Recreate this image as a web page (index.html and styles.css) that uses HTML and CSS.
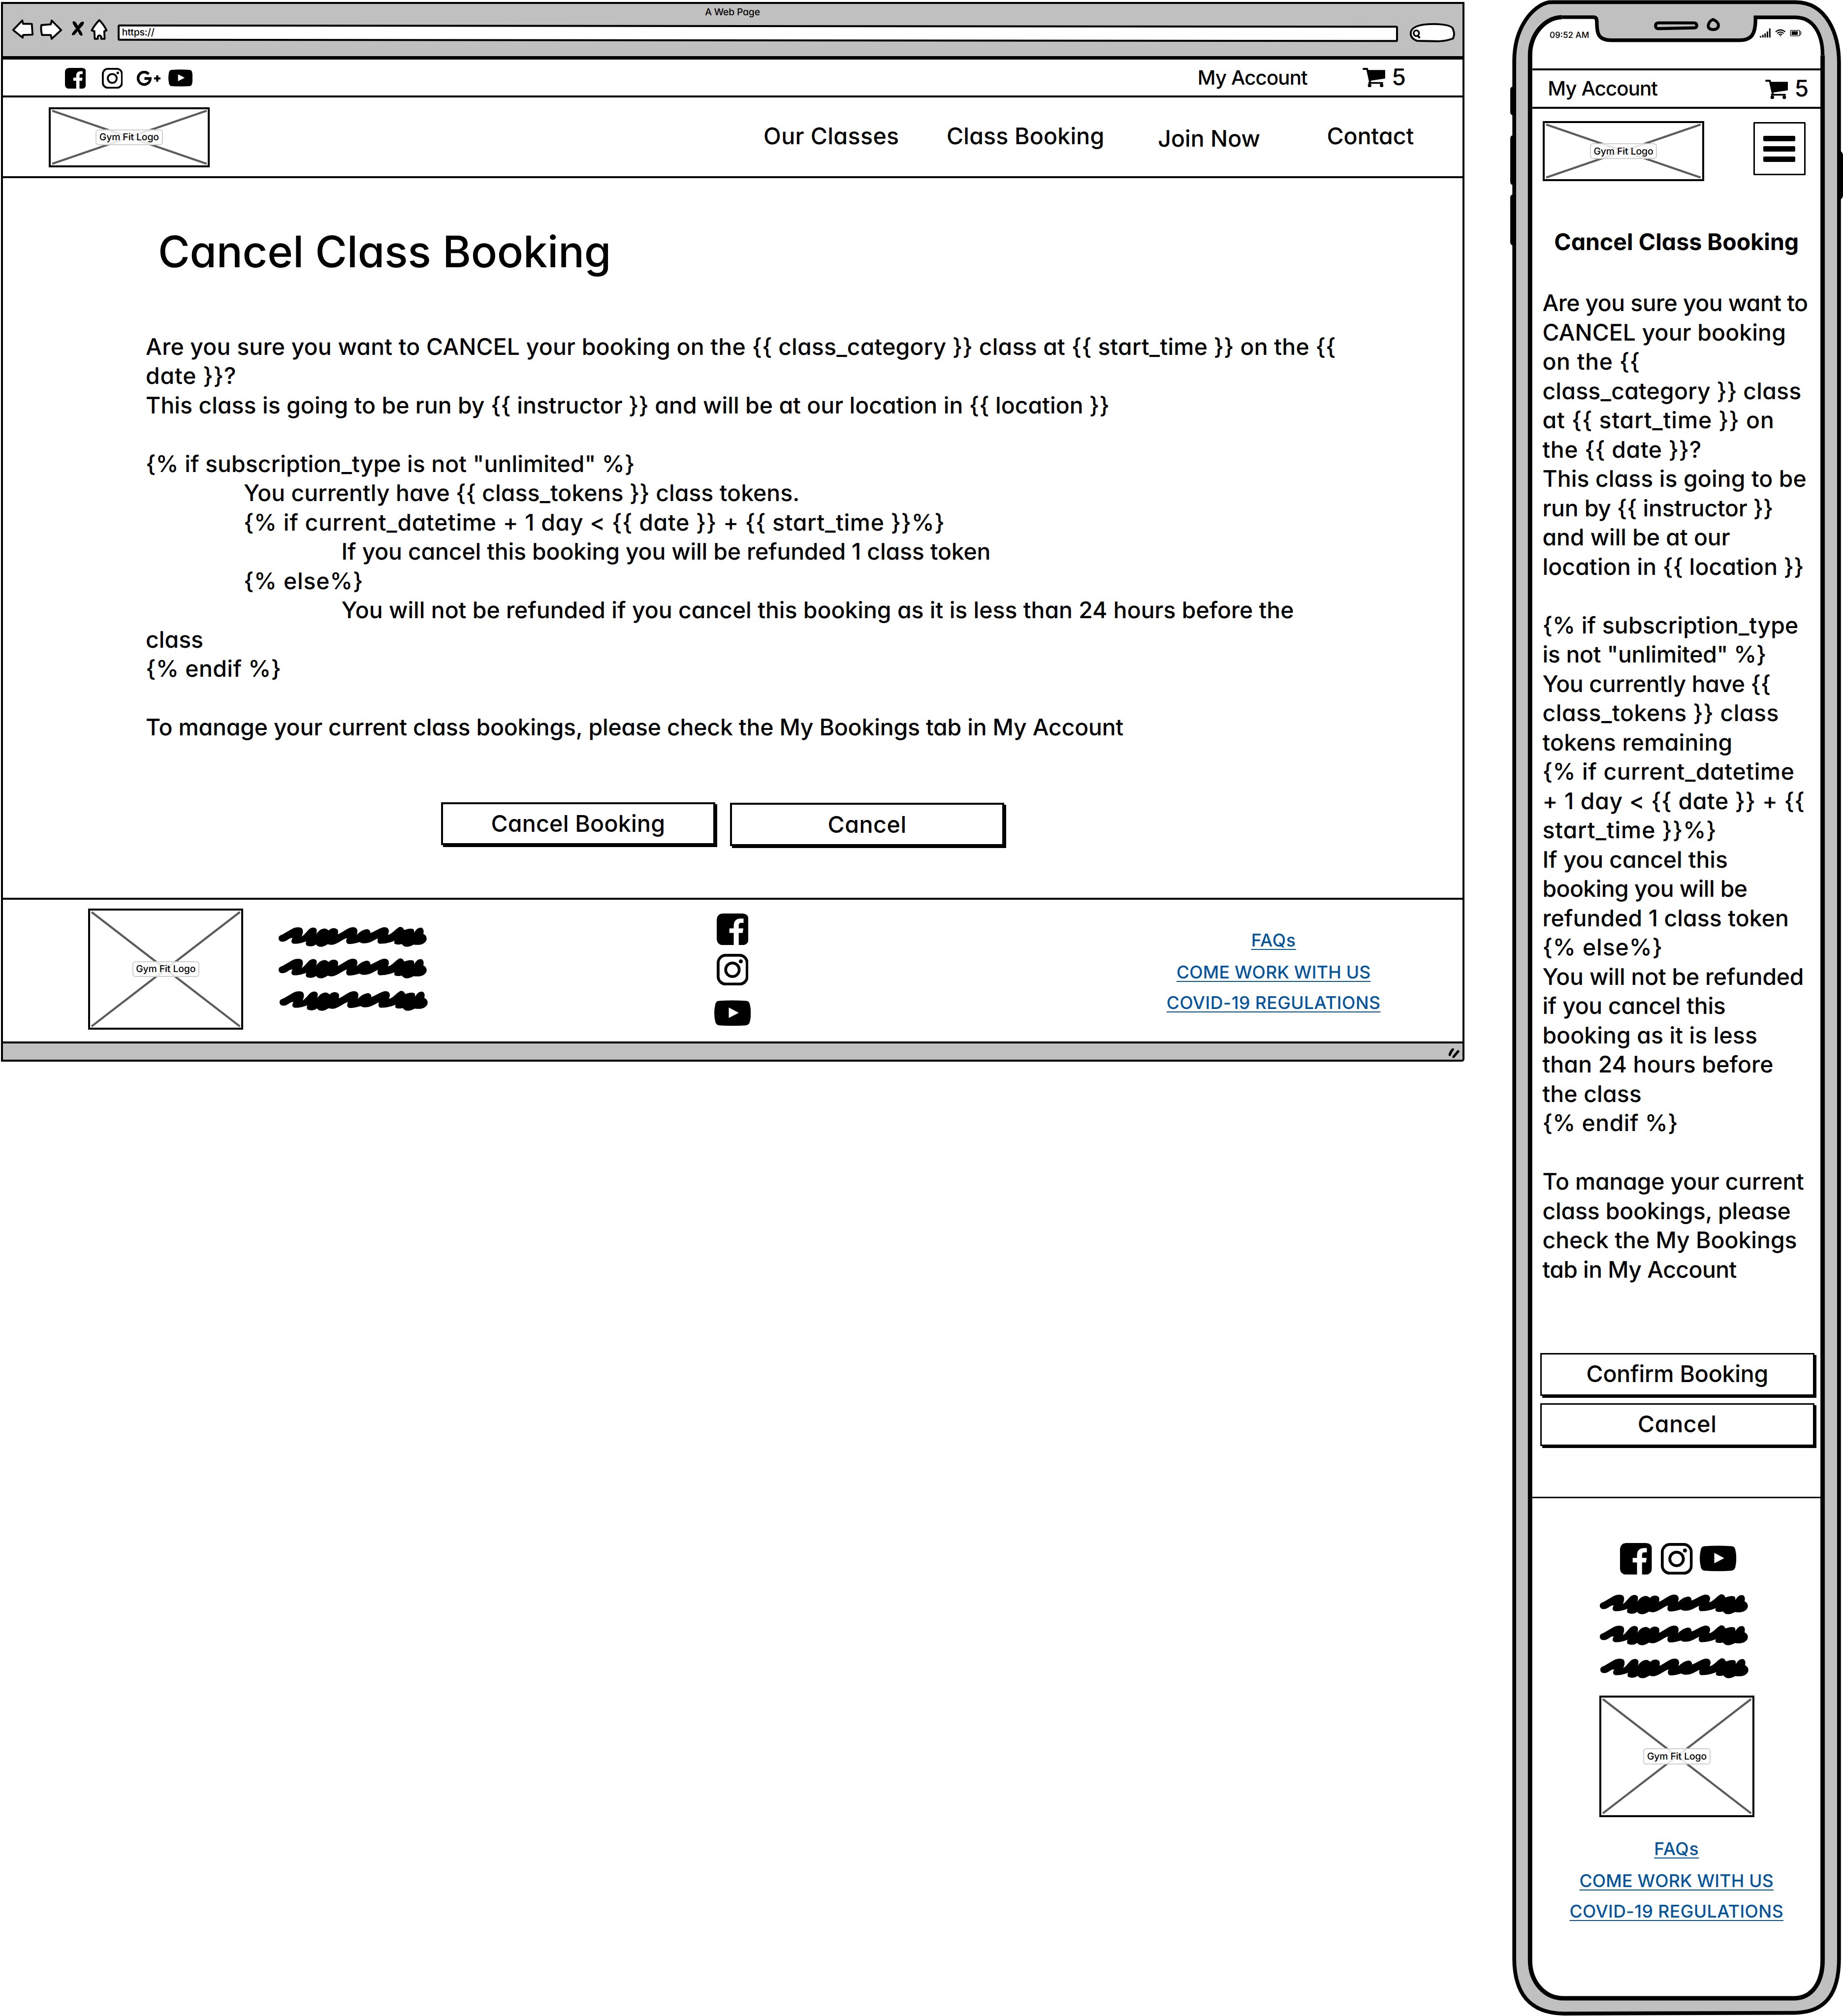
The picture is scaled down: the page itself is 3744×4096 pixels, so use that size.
FILE: index.html
```html
<!DOCTYPE html>
<html lang="en">
<head>
<meta charset="utf-8">
<title>Cancel Class Booking</title>
<link rel="stylesheet" href="styles.css">
</head>
<body>
<svg class="defs" aria-hidden="true">
  <symbol id="fb" viewBox="0 0 146 145"><path fill-rule="evenodd" d="M27 0H119Q146 2 146 27V118Q144 143 120 145H101V89H119L122 68H101V56C101 48 103 43 112 43H123V23H110C90 23 78 34 78 56V68H58V89H78V145H27Q2 143 0 118V27Q2 2 27 0Z"/></symbol>
  <symbol id="ig" viewBox="0 0 146 145"><rect x="6.5" y="6.5" width="133" height="132" rx="35" fill="none" stroke="#000" stroke-width="13"/><circle cx="72" cy="73" r="31" fill="none" stroke="#000" stroke-width="13"/><circle cx="110.500" cy="34.500" r="9"/></symbol>
  <symbol id="yt" viewBox="0 0 169 119"><path fill-rule="evenodd" d="M22 3Q85 -2 147 3Q161 4 164 18Q174 59 164 101Q160 114 147 116Q85 121 22 116Q9 115 5 101Q-5 59 5 18Q8 4 22 3ZM67 34V82L113 58Z"/></symbol>
  <symbol id="gp" viewBox="0 0 62 40"><path d="M31 8.500A16 16.200 0 1 0 35.200 20H20" fill="none" stroke="#000" stroke-width="7"/><path d="M45 20H62M53.500 11.500V28.500" stroke="#000" stroke-width="5.500"/></symbol>
  <symbol id="cart" viewBox="0 0 60 51"><path d="M2.500 2.500H12L20 38" fill="none" stroke="#000" stroke-width="5" stroke-linecap="round" stroke-linejoin="round"/><path d="M13 5.500H58Q60 5.500 60 7.500V25Q60 27 58 28L18 34Z"/><path d="M17 39.500H52" stroke="#000" stroke-width="4.500" stroke-linecap="round"/><circle cx="18.500" cy="46" r="4.700"/><circle cx="50" cy="46" r="4.700"/></symbol>
  <symbol id="scribble" viewBox="447 1217 684 93" preserveAspectRatio="none"><path d="M447 1270C447 1258 455 1256 465 1252L510 1226C525 1217 550 1217 556 1226C562 1238 558 1250 553 1262C565 1256 575 1240 588 1228C598 1218 615 1217 622 1228C624 1238 622 1246 620 1252C632 1232 645 1226 660 1225C670 1226 674 1232 678 1234C688 1222 710 1218 720 1232C722 1240 721 1246 720 1252C745 1240 765 1222 785 1219C805 1218 812 1228 810 1242L807 1254C820 1242 835 1230 855 1228C867 1230 870 1238 870 1246C890 1238 910 1224 930 1219C950 1218 957 1228 955 1242L951 1254C970 1250 985 1228 1003 1218C1015 1215 1022 1222 1026 1232C1038 1228 1055 1222 1068 1228C1072 1232 1072 1238 1072 1244C1080 1230 1090 1219 1105 1221C1117 1226 1117 1238 1114 1250C1128 1256 1132 1268 1128 1280C1120 1296 1100 1304 1070 1299C1060 1304 1048 1310 1036 1309C1026 1309 1020 1302 1014 1296C1000 1301 985 1298 981 1294C979 1288 981 1284 982 1281C965 1289 935 1296 912 1295C902 1292 901 1280 905 1270C890 1276 870 1292 845 1293C832 1294 825 1290 820 1287C805 1292 785 1297 768 1296C756 1292 757 1280 762 1269C745 1272 725 1292 700 1299C690 1301 680 1300 674 1297C662 1304 650 1311 640 1309C630 1309 624 1304 619 1298C610 1307 590 1310 576 1303C571 1298 572 1290 575 1284C558 1290 538 1297 516 1295C503 1292 504 1280 511 1269C500 1266 490 1278 476 1284C462 1288 447 1284 447 1270Z"/></symbol>
</svg>

<div class="canvas">
  <section class="browser">
    <header class="chrome">
      <div class="chrome-title">A Web Page</div>
      <div class="chrome-row">
        <svg class="chrome-icons" viewBox="28 48 260 60">
          <g fill="#fff" stroke="#000" stroke-width="5" stroke-linejoin="round">
            <path d="M34 79L58 54L60 62.500L83 63L85 91L60 92L59 99Z"/>
            <path d="M108 66L133 64L135 54L160 79L135 102L133 92L110 92Q106 80 108 66Z"/>
            <path d="M260 53Q272 65 279 80L273 82L274 102H265V96Q260 90 256 96V102H248L247 82L240 80Q248 65 260 53Z"/>
          </g>
          <path d="M190 57Q196 54 200 61L204 68L210 60Q215 55 220 58Q220 66 208 76Q216 86 216 93Q211 96 207 89L203 82L197 90Q193 94 188 92Q187 87 199 75Q189 63 190 57Z"/>
        </svg>
        <div class="url"><span>https://</span></div>
        <svg class="search" viewBox="3692 58 126 56">
          <path d="M3698 88Q3698 63 3759 63Q3806 64 3809 76Q3815 90 3809 101Q3788 109 3765 108L3715 107Q3699 102 3698 88Z" fill="#fff" stroke="#000" stroke-width="5"/>
          <ellipse cx="3713" cy="87" rx="7" ry="7.500" fill="none" stroke="#000" stroke-width="4.500"/><path d="M3716 94L3721 98" stroke="#000" stroke-width="5" stroke-linecap="round"/>
        </svg>
      </div>
    </header>

    <div class="topbar">
      <svg class="i-fb"><use href="#fb"/></svg>
      <svg class="i-ig"><use href="#ig"/></svg>
      <svg class="i-gp"><use href="#gp"/></svg>
      <svg class="i-yt"><use href="#yt"/></svg>
      <span class="account">My Account</span>
      <svg class="cart"><use href="#cart"/></svg>
      <span class="count">5</span>
    </div>

    <div class="masthead">
      <div class="logo wide">
        <svg viewBox="0 0 423 157"><path d="M9 9L414 148M9 148L414 9"/></svg>
        <span>Gym Fit Logo</span>
      </div>
      <nav class="nav">
        <a class="n1">Our Classes</a><a class="n2">Class Booking</a><a class="n3">Join Now</a><a class="n4">Contact</a>
      </nav>
    </div>

    <main class="main">
      <h1>Cancel Class Booking</h1>
      <div class="copy copy-wide">
        <p>Are you sure you want to CANCEL your booking on the {{ class_category }} class at {{ start_time }} on the {{</p>
        <p>date }}?</p>
        <p>This class is going to be run by {{ instructor }} and will be at our location in {{ location }}</p>
        <p></p>
        <p>{% if subscription_type is not "unlimited" %}</p>
        <p class="in1">You currently have {{ class_tokens }} class tokens.</p>
        <p class="in1">{% if current_datetime + 1 day &lt; {{ date }} + {{ start_time }}%}</p>
        <p class="in2">If you cancel this booking you will be refunded 1 class token</p>
        <p class="in1">{% else%}</p>
        <p class="in2">You will not be refunded if you cancel this booking as it is less than 24 hours before the</p>
        <p>class</p>
        <p>{% endif %}</p>
        <p></p>
        <p>To manage your current class bookings, please check the My Bookings tab in My Account</p>
      </div>
      <div class="actions">
        <button class="btn">Cancel Booking</button>
        <button class="btn short">Cancel</button>
      </div>
    </main>

    <footer class="footer">
      <div class="logo tall">
        <svg viewBox="0 0 407 318"><path d="M9 9L398 309M9 309L398 9"/></svg>
        <span>Gym Fit Logo</span>
      </div>
      <div class="scribbles">
        <svg><use href="#scribble"/></svg><svg><use href="#scribble"/></svg><svg><use href="#scribble"/></svg>
      </div>
      <div class="social">
        <svg class="s-sq"><use href="#fb"/></svg>
        <svg class="s-sq"><use href="#ig"/></svg>
        <svg class="s-yt"><use href="#yt"/></svg>
      </div>
      <div class="links"><a>FAQs</a><a>COME WORK WITH US</a><a>COVID-19 REGULATIONS</a></div>
    </footer>
    <div class="statusline">
      <svg viewBox="0 0 32 28"><path d="M4 17Q6 9 12 3M14 22L26 8" stroke="#000" stroke-width="6.500" stroke-linecap="round" fill="none"/></svg>
    </div>
  </section>

  <section class="phone">
    <svg class="shell" viewBox="3960 0 872 5286">
      <path d="M3966 228.500Q3961 229 3961 236V294Q3961 300 3966 301ZM3966 356Q3961 357 3961 364V476Q3961 483 3966 484ZM3966 511Q3961 512 3961 519V634Q3961 641 3966 642ZM4824 396Q4832 399 4832 412V508Q4832 520 4824 523Z" stroke="#000" stroke-width="2"/>
      <path d="M4075 5.500H4708C4790 6 4822 90 4822 165V5135C4822 5230 4785 5277 4705 5278L4100 5280C4010 5279 3970.500 5225 3970.500 5135V160C3970.500 70 4020 15 4060 6Q4066 5.500 4075 5.500Z" fill="#c0c0c0" stroke="#000" stroke-width="10"/>
      <path d="M4095 45H4178Q4187 45 4187 56C4187 88 4190 105 4225 105.500H4562C4594 105 4602 88 4603 56V45.500H4708C4755 46 4779 90 4779 145V5140C4779 5200 4750 5239 4706 5240H4100C4052 5240 4012 5200 4012 5140V145C4012 90 4050 47 4095 45Z" fill="#fff"/>
      <g fill="none" stroke="#000">
        <path d="M4095 45H4178Q4187 45 4187 56C4187 88 4190 105 4225 105.500H4562C4594 105 4602 88 4603 56V45.500H4708C4756 46 4779 90 4779 145" stroke-width="9.500"/>
        <path d="M4779 145V5140C4779 5200 4750 5239 4706 5240H4100C4052 5240 4012 5200 4012 5140V145C4012 90 4050 47 4095 45" stroke-width="11.500"/>
        <path d="M4349 60H4441Q4449 60 4449 67Q4449 73 4441 73L4349 75Q4341 75 4341 67Q4341 60 4349 60Z" stroke-width="8"/>
        <path d="M4492 51Q4506 57 4506 67Q4505 77 4492 77.500Q4479 77 4479 67Q4481 55 4492 51Z" stroke-width="7.500"/>
      </g>
    </svg>
    <div class="screen">
      <div class="status">
        <span class="time">09:52 AM</span>
        <svg class="indicators" viewBox="4614 74 110 26">
          <path d="M4616 95V99M4622 91.500V99M4628 88V99M4634 83V99M4640.200 75V99" stroke="#000" stroke-width="3.800"/>
          <g fill="none" stroke="#000" stroke-width="3"><path d="M4655.500 84Q4668 73.500 4680.500 84M4659.500 88Q4668 81 4676.500 88"/><path d="M4663.500 91.500Q4668 88.500 4672.500 91.500" stroke-width="2.600"/></g><path d="M4665 93.500H4671L4668 96Z"/>
          <rect x="4694.500" y="80" width="24" height="14.500" rx="2" fill="none" stroke="#000" stroke-width="1.800"/><rect x="4697.500" y="82.500" width="16" height="9.500"/><path d="M4719 82.500Q4722 83 4722 87T4719 92" fill="none" stroke="#000" stroke-width="1.600"/>
        </svg>
      </div>
      <div class="m-bar">
        <span class="account">My Account</span>
        <svg class="cart"><use href="#cart"/></svg>
        <span class="count">5</span>
      </div>
      <div class="m-head">
        <div class="logo wide">
          <svg viewBox="0 0 423 157"><path d="M9 9L414 148M9 148L414 9"/></svg>
          <span>Gym Fit Logo</span>
        </div>
        <div class="burger"><i></i><i></i><i></i></div>
      </div>
      <h2>Cancel Class Booking</h2>
      <div class="copy copy-slim">
        <p>Are you sure you want to</p>
        <p>CANCEL your booking</p>
        <p>on the {{</p>
        <p>class_category }} class</p>
        <p>at {{ start_time }} on</p>
        <p>the {{ date }}?</p>
        <p>This class is going to be</p>
        <p>run by {{ instructor }}</p>
        <p>and will be at our</p>
        <p>location in {{ location }}</p>
        <p></p>
        <p>{% if subscription_type</p>
        <p>is not "unlimited" %}</p>
        <p>You currently have {{</p>
        <p>class_tokens }} class</p>
        <p>tokens remaining</p>
        <p>{% if current_datetime</p>
        <p>+ 1 day &lt; {{ date }} + {{</p>
        <p>start_time }}%}</p>
        <p>If you cancel this</p>
        <p>booking you will be</p>
        <p>refunded 1 class token</p>
        <p>{% else%}</p>
        <p>You will not be refunded</p>
        <p>if you cancel this</p>
        <p>booking as it is less</p>
        <p>than 24 hours before</p>
        <p>the class</p>
        <p>{% endif %}</p>
        <p></p>
        <p>To manage your current</p>
        <p>class bookings, please</p>
        <p>check the My Bookings</p>
        <p>tab in My Account</p>
      </div>
      <div class="m-actions">
        <button class="btn confirm">Confirm Booking</button>
        <button class="btn short">Cancel</button>
      </div>
      <div class="m-footer">
        <div class="m-social">
          <svg class="s-sq"><use href="#fb"/></svg>
          <svg class="s-sq"><use href="#ig"/></svg>
          <svg class="s-yt"><use href="#yt"/></svg>
        </div>
        <div class="scribbles">
          <svg><use href="#scribble"/></svg><svg><use href="#scribble"/></svg><svg><use href="#scribble"/></svg>
        </div>
        <div class="logo tall">
          <svg viewBox="0 0 407 318"><path d="M9 9L398 309M9 309L398 9"/></svg>
          <span>Gym Fit Logo</span>
        </div>
        <div class="links"><a>FAQs</a><a>COME WORK WITH US</a><a>COVID-19 REGULATIONS</a></div>
      </div>
    </div>
  </section>
</div>
</body>
</html>
```

FILE: styles.css
```css
/* 1rem = 100 design units */
html { font-size: 77.483px; }
* { box-sizing: border-box; }
body {
  margin: 0;
  background: #fff;
  color: #000;
  font: 500 .6rem/1 Inter, "Liberation Sans", sans-serif;
  font-feature-settings: "cv11";
  text-rendering: geometricPrecision;
}
h1, h2, p { margin: 0; font-weight: 500; }
svg { display: block; flex: none; }
.defs { position: absolute; width: 0; height: 0; }
.canvas { display: flex; align-items: flex-start; width: 48.32rem; height: 52.86rem; overflow: hidden; }

/* browser window */
.browser {
  display: flex; flex-direction: column; flex: none;
  width: 38.37rem; height: 27.79rem;
  margin: .05rem 0 0 .02rem;
  border: 4px solid #000;
  border-radius: 0 0 .07rem 0;
}
.chrome { flex: none; height: 1.455rem; background: #c0c0c0; border-bottom: 7px solid #000; }
.chrome-title { height: .33rem; padding-top: .095rem; font-size: .25rem; font-weight: 450; text-align: center; letter-spacing: -.01em; }
.chrome-row { display: flex; align-items: flex-start; padding: .05rem 0 0 .21rem; }
.chrome-icons { width: 2.6rem; height: .6rem; }
.url { position: relative; width: 33.57rem; height: .42rem; margin: .175rem 0 0 .2rem; padding: .07rem 0 0 .115rem; font-size: .25rem; font-weight: 450; letter-spacing: -.005em; }
.url::before {
  content: ""; position: absolute; inset: 0;
  background: #fff; border: 4px solid #000; border-radius: .05rem;
  transform: skewY(.06deg);
}
.url span { position: relative; }
.search { width: 1.26rem; height: .56rem; margin: .1rem 0 0 .27rem; }

.topbar { display: flex; align-items: flex-start; flex: none; height: 1rem; border-bottom: 4px solid #000; }
.i-fb, .i-ig { width: .55rem; height: .547rem; margin-top: .22rem; }
.i-fb { margin-left: 1.63rem; }
.i-ig { margin-left: .415rem; }
.i-gp { width: .62rem; height: .4rem; margin: .3rem 0 0 .375rem; }
.i-yt { width: .64rem; height: .45rem; margin: .267rem 0 0 .2rem; }
.account { width: 2.9rem; font-size: .52rem; letter-spacing: -.023em; white-space: nowrap; }
.cart { width: .6rem; height: .51rem; }
.topbar .account { margin: .226rem 0 0 auto; }
.topbar .cart { margin: .22rem 0 0 1.42rem; }
.topbar .count { margin: .175rem 1.48rem 0 .17rem; }

.masthead { display: flex; align-items: flex-start; flex: none; height: 2.11rem; border-bottom: 4px solid #000; }
.masthead .logo { margin: .257rem 0 0 1.2rem; }
.nav { display: flex; margin-left: auto; padding-top: .72rem; }
.n1 { width: 4.8rem; letter-spacing: .009em; }
.n2 { width: 5.54rem; letter-spacing: .004em; }
.n3 { width: 4.43rem; padding-top: .065rem; letter-spacing: 0; }
.n4 { width: 3.55rem; letter-spacing: 0; }

.logo { display: grid; place-items: center; flex: none; border: 4px solid #000; }
.logo > * { grid-area: 1 / 1; }
.logo svg { margin: -4px; fill: none; stroke: #5c5c5c; stroke-width: 5.5; }
.logo span {
  width: 1.76rem; height: .42rem; padding-top: .06rem;
  border: 2px solid #cfcfcf; border-radius: .08rem;
  background: rgba(255, 255, 255, .85);
  font-size: .25rem; font-weight: 450; text-align: center; white-space: nowrap; letter-spacing: -.005em;
}
.wide, .wide svg { width: 4.23rem; height: 1.57rem; }
.tall, .tall svg { width: 4.07rem; height: 3.18rem; }

.main { flex: none; height: 18.88rem; }
h1 { padding: 1.37rem 0 0 4.07rem; font-size: 1.14rem; letter-spacing: -.003em; }
.copy { font-size: .598rem; line-height: .768rem; white-space: nowrap; }
.copy p { height: .768rem; }
.copy-wide { margin: 1.545rem 0 0 3.75rem; }
.in1 { padding-left: 2.566rem; }
.in2 { padding-left: 5.13rem; }
.copy-wide p:nth-child(1) { letter-spacing: .0045em; }
.copy-wide p:nth-child(2) { letter-spacing: .018em; }
.copy-wide p:nth-child(3) { letter-spacing: .001em; }
.copy-wide p:nth-child(5) { letter-spacing: .002em; }
.copy-wide p:nth-child(6) { letter-spacing: .001em; }
.copy-wide p:nth-child(7) { letter-spacing: .015em; }
.copy-wide p:nth-child(8) { letter-spacing: -.0033em; }
.copy-wide p:nth-child(9) { letter-spacing: .017em; }
.copy-wide p:nth-child(11) { letter-spacing: 0; }
.copy-wide p:nth-child(12) { letter-spacing: .01em; }
.copy-wide p:nth-child(14) { letter-spacing: -.0035em; }

.actions { display: flex; align-items: flex-start; gap: .39rem; padding: 1.56rem 0 0 11.49rem; }
.btn {
  flex: none; width: 7.19rem; height: 1.13rem; margin: 0; padding: .215rem 0 0;
  display: flex; justify-content: center; align-items: flex-start;
  border: 3px solid #000; border-radius: 0; background: #fff;
  box-shadow: 4px 4px 0 #000;
  color: inherit; font: inherit; font-feature-settings: inherit; letter-spacing: .006em;
}
.actions .btn { border-width: 4px; }
.actions .short { margin-top: .02rem; }
.short { letter-spacing: .014em; }
.confirm { letter-spacing: -.005em; }

.footer { display: flex; align-items: flex-start; flex: none; height: 3.76rem; border-top: 4px solid #000; }
.footer .logo { margin: .225rem 0 0 2.24rem; }
.scribbles svg { width: 3.89rem; height: .53rem; }
.scribbles svg:nth-child(2) { margin-top: .29rem; }
.scribbles svg:nth-child(3) { margin: .33rem 0 0 .02rem; }
.footer .scribbles { margin: .705rem 0 0 .93rem; width: 3.88rem; }
.social { display: flex; flex-direction: column; align-items: center; width: .96rem; margin: .355rem 0 0 7.535rem; }
.s-sq { width: .835rem; height: .83rem; }
.s-yt { width: .96rem; height: .68rem; }
.social .s-sq + .s-sq { margin-top: .23rem; }
.social .s-yt { margin-top: .385rem; }
.links { display: flex; flex-direction: column; align-items: center; font-size: .46rem; white-space: nowrap; color: #075499; }
.links a { text-decoration: underline .03rem; text-decoration-skip-ink: none; text-underline-offset: .06rem; }
.links a:nth-child(1) { letter-spacing: .02em; }
.links a:nth-child(2) { letter-spacing: .006em; margin-top: .385rem; }
.links a:nth-child(3) { letter-spacing: .012em; margin-top: .337rem; }
.footer .links { width: 5.62rem; margin: .833rem 0 0 10.895rem; }
.statusline { flex: 1; background: #c0c0c0; border-top: 4px solid #000; display: flex; justify-content: flex-end; padding: .13rem .05rem 0 0; }
.statusline svg { width: .32rem; height: .28rem; }

/* phone */
.phone { position: relative; flex: none; width: 8.72rem; height: 52.86rem; margin-left: 1.21rem; }
.shell { position: absolute; inset: 0; width: 8.72rem; height: 52.86rem; }
.screen { position: relative; padding: 0 .59rem 0 .58rem; }
.status { display: flex; align-items: flex-start; height: 1.79rem; }
.time { margin: .81rem 0 0 .45rem; font-size: .22rem; font-weight: 450; }
.indicators { width: 1.1rem; height: .26rem; margin: .74rem .49rem 0 auto; }
.m-bar { display: flex; align-items: flex-start; height: 1.06rem; border: solid #000; border-width: 4px 0; }
.m-bar .account { margin: .22rem 0 0 .4rem; }
.m-bar .cart { margin: .25rem 0 0 auto; }
.m-bar .count { margin: .19rem .31rem 0 .17rem; }
.m-head { display: flex; align-items: flex-start; height: 2rem; padding: .33rem .385rem 0 .27rem; }
.burger {
  display: flex; flex-direction: column; gap: .132rem;
  width: 1.38rem; height: 1.39rem; margin: .02rem 0 0 auto; padding: .32rem 0 0 .23rem;
  border: 3px solid #000; border-radius: .02rem;
}
.burger i { width: .83rem; height: .143rem; border-radius: .03rem; background: #000; }
h2 { margin-top: 1.205rem; font-size: .6rem; font-weight: 700; text-align: center; letter-spacing: .001em; }
.copy-slim { margin: .925rem 0 0 .26rem; }
.copy-slim p:nth-child(1) { letter-spacing: -.012em; }
.copy-slim p:nth-child(2) { letter-spacing: .003em; }
.copy-slim p:nth-child(3) { letter-spacing: .015em; }
.copy-slim p:nth-child(4) { letter-spacing: .005em; }
.copy-slim p:nth-child(5) { letter-spacing: .019em; }
.copy-slim p:nth-child(6) { letter-spacing: .014em; }
.copy-slim p:nth-child(7) { letter-spacing: .002em; }
.copy-slim p:nth-child(8) { letter-spacing: -.004em; }
.copy-slim p:nth-child(9) { letter-spacing: -.001em; }
.copy-slim p:nth-child(10) { letter-spacing: .0035em; }
.copy-slim p:nth-child(12) { letter-spacing: .0035em; }
.copy-slim p:nth-child(13) { letter-spacing: -.006em; }
.copy-slim p:nth-child(14) { letter-spacing: -.008em; }
.copy-slim p:nth-child(15) { letter-spacing: .012em; }
.copy-slim p:nth-child(16) { letter-spacing: .005em; }
.copy-slim p:nth-child(17) { letter-spacing: .0135em; }
.copy-slim p:nth-child(18) { letter-spacing: .014em; }
.copy-slim p:nth-child(19) { letter-spacing: .02em; }
.copy-slim p:nth-child(20) { letter-spacing: -.002em; }
.copy-slim p:nth-child(21) { letter-spacing: -.012em; }
.copy-slim p:nth-child(22) { letter-spacing: .002em; }
.copy-slim p:nth-child(23) { letter-spacing: .02em; }
.copy-slim p:nth-child(24) { letter-spacing: -.005em; }
.copy-slim p:nth-child(25) { letter-spacing: -.006em; }
.copy-slim p:nth-child(26) { letter-spacing: .002em; }
.copy-slim p:nth-child(27) { letter-spacing: .003em; }
.copy-slim p:nth-child(28) { letter-spacing: .003em; }
.copy-slim p:nth-child(29) { letter-spacing: .0105em; }
.copy-slim p:nth-child(31) { letter-spacing: -.003em; }
.copy-slim p:nth-child(32) { letter-spacing: -.003em; }
.copy-slim p:nth-child(34) { letter-spacing: -.012em; }
.m-actions { display: flex; flex-direction: column; gap: .19rem; margin: 1.785rem 0 0 .2rem; }
.m-footer { margin-top: 1.33rem; padding-top: 1.165rem; border-top: 3px solid #000; }
.m-social { display: flex; padding-left: 2.3rem; }
.m-social .s-sq + .s-sq { margin-left: .23rem; }
.m-social .s-yt { margin: .07rem 0 0 .19rem; }
.m-footer .scribbles { margin: .51rem 0 0 1.76rem; }
.m-footer .logo { margin: .46rem 0 0 1.75rem; }
.m-footer .links { margin-top: .605rem; }
```
